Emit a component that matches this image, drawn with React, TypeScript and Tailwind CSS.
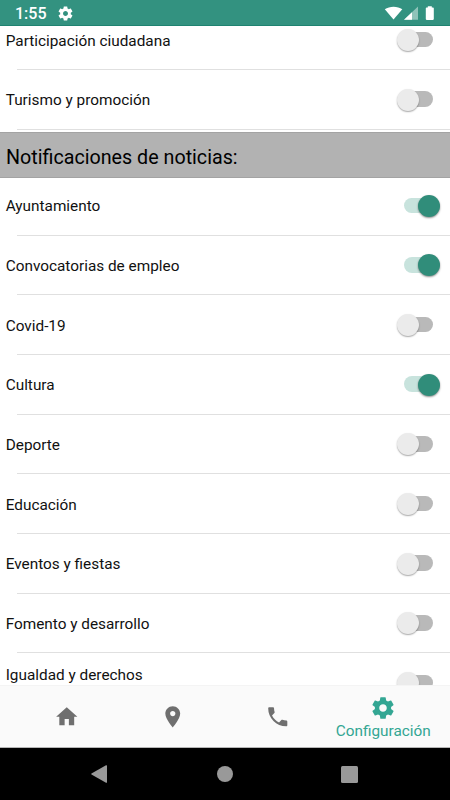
// src/App.tsx
import clsx from "clsx";

type Topic = { name: string; on?: boolean; tall?: boolean };

const agendaTopics: Topic[] = [
  { name: "Participación ciudadana" },
  { name: "Turismo y promoción" },
];

const newsTopics: Topic[] = [
  { name: "Ayuntamiento", on: true },
  { name: "Convocatorias de empleo", on: true },
  { name: "Covid-19" },
  { name: "Cultura", on: true },
  { name: "Deporte" },
  { name: "Educación" },
  { name: "Eventos y fiestas" },
  { name: "Fomento y desarrollo" },
  { name: "Igualdad y derechos", tall: true },
];

const GEAR =
  "M19.43 12.98c.04-.32.07-.64.07-.98s-.03-.66-.07-.98l2.11-1.65c.19-.15.24-.42.12-.64l-2-3.46c-.12-.22-.39-.3-.61-.22l-2.49 1c-.52-.4-1.08-.73-1.69-.98l-.38-2.65C14.46 2.18 14.25 2 14 2h-4c-.25 0-.46.18-.49.42l-.38 2.65c-.61.25-1.17.59-1.69.98l-2.49-1c-.23-.09-.49 0-.61.22l-2 3.46c-.13.22-.07.49.12.64l2.11 1.65c-.04.32-.07.65-.07.98s.03.66.07.98l-2.11 1.65c-.19.15-.24.42-.12.64l2 3.46c.12.22.39.3.61.22l2.49-1c.52.4 1.08.73 1.69.98l.38 2.65c.03.24.24.42.49.42h4c.25 0 .46-.18.49-.42l.38-2.65c.61-.25 1.17-.59 1.69-.98l2.49 1c.23.09.49 0 .61-.22l2-3.46c.12-.22.07-.49-.12-.64l-2.11-1.65zM12 15.5c-1.93 0-3.5-1.57-3.5-3.5s1.57-3.5 3.5-3.5 3.5 1.57 3.5 3.5-1.57 3.5-3.5 3.5z";
const HOME = "M10 20v-6h4v6h5v-8h3L12 3 2 12h3v8z";
const PIN =
  "M12 2C8.13 2 5 5.13 5 9c0 5.25 7 13 7 13s7-7.75 7-13c0-3.87-3.13-7-7-7zm0 9.5c-1.38 0-2.5-1.12-2.5-2.5s1.12-2.5 2.5-2.5 2.5 1.12 2.5 2.5-1.12 2.5-2.5 2.5z";
const PHONE =
  "M20 15.5c-1.25 0-2.45-.2-3.57-.57-.1-.03-.21-.05-.31-.05-.26 0-.51.1-.71.29l-2.2 2.2c-2.83-1.44-5.15-3.75-6.59-6.59l2.2-2.21c.28-.26.36-.65.25-1C8.7 6.45 8.5 5.25 8.5 4c0-.55-.45-1-1-1H4c-.55 0-1 .45-1 1 0 9.39 7.61 17 17 17 .55 0 1-.45 1-1v-3.5c0-.55-.45-1-1-1z";

function Icon({ path, className }: { path: string; className?: string }) {
  return (
    <svg viewBox="0 0 24 24" fill="currentColor" className={className}>
      <path d={path} />
    </svg>
  );
}

function StatusBar() {
  return (
    <header className="z-10 flex h-[26px] shrink-0 items-center border-b border-[#1f8371] bg-[#339280] pl-[15px] pr-[14px] pt-[2px] text-white">
      <span className="w-[31px] pt-px text-[16px] leading-none font-medium">1:55</span>
      <Icon path={GEAR} className="ml-[11px] size-[17px] -mt-px" />
      <svg viewBox="0 0 52 16" className="ml-auto h-4 w-[52px]">
        <path d="M.8 3.300C5.500 -.2 13.600 -.2 18.300 3.300L9.500 13.600z" fill="#fff" />
        <path d="M34 .5v13.200H20z" fill="#fff" fillOpacity=".45" />
        <path d="M28 6.200v7.500h-8z" fill="#fff" />
        <path d="M43.800 1.500V.3h4v1.200h1.200c.5 0 .8.300.8.800v10.800c0 .5-.3.800-.8.800h-6.400c-.5 0-.8-.3-.8-.8V2.300c0-.5.3-.8.800-.8z" fill="#fff" />
      </svg>
    </header>
  );
}

function Toggle({ on }: { on?: boolean }) {
  return (
    <span
      role="switch"
      aria-checked={!!on}
      className={clsx(
        "flex w-[43.500px] shrink-0 items-center",
        on ? "justify-end" : "justify-start"
      )}
    >
      {on ? (
        <>
          <span className="-mr-[14px] -mt-px h-[15.500px] w-[28px] rounded-full bg-[#c8e3dd]" />
          <span className="z-[1] size-[22px] rounded-full bg-[#308d7a] shadow-[0_1px_2px_rgba(0,0,0,0.45)]" />
        </>
      ) : (
        <>
          <span className="z-[1] size-[22px] rounded-full bg-[#ebebeb] shadow-[0_1px_1.500px_rgba(0,0,0,0.35)]" />
          <span className="-ml-[14px] -mt-px h-[15.500px] w-[28px] rounded-full bg-[#b9b9b9]" />
        </>
      )}
    </span>
  );
}

function TopicRow({ topic, first }: { topic: Topic; first?: boolean }) {
  return (
    <li className={clsx("flex shrink-0 flex-col", first ? "h-[58px]" : "h-[59.67px]")}>
      <div
        className={clsx(
          "flex flex-1 items-center justify-between pl-[5.700px] pr-[10px]",
          first ? "pb-px" : "pt-[0.500px]"
        )}
      >
        <span
          className={clsx(
            "text-[15.350px] leading-[18px] text-[#111]",
            topic.tall ? "pb-[15.500px]" : "pt-px"
          )}
        >
          {topic.name}
        </span>
        <Toggle on={topic.on} />
      </div>
      <div className="ml-[17px] h-px bg-[#e0e0e0]" />
    </li>
  );
}

function TabBar() {
  return (
    <nav className="z-10 flex h-[63px] shrink-0 items-center border-t border-b border-t-[#f4f4f4] border-b-[#b5b5b5] bg-[#fafafa] pl-[14px] text-[#6f6f6f]">
      <div className="flex w-[105.500px] justify-center">
        <Icon path={HOME} className="size-[25.500px]" />
      </div>
      <div className="flex w-[105.500px] justify-center">
        <Icon path={PIN} className="size-[25.500px]" />
      </div>
      <div className="flex w-[105.500px] justify-center">
        <Icon path={PHONE} className="size-[25.500px]" />
      </div>
      <div className="flex w-[105.500px] flex-col items-center pt-[4px] text-[#33a693]">
        <Icon path={GEAR} className="size-[26px]" />
        <span className="text-[15.350px] leading-[21px]">Configuración</span>
      </div>
    </nav>
  );
}

function SystemNav() {
  return (
    <footer className="flex h-[52px] shrink-0 items-center bg-black pl-[90px] text-[#999]">
      <svg viewBox="0 0 18 18" className="size-[18px]" fill="currentColor">
        <path d="M16 .3c.6-.3 1 0 1 .5v16.400c0 .5-.4.800-1 .5L1.500 9.500c-.5-.3-.5-.7 0-1z" />
      </svg>
      <span className="ml-[109px] size-[15.500px] rounded-full bg-[#999]" />
      <span className="ml-[108.500px] size-[17px] rounded-[1.500px] bg-[#999]" />
    </footer>
  );
}

function App() {
  return (
    <div className="flex h-[800px] w-[450px] flex-col overflow-hidden bg-white font-['Roboto',sans-serif]">
      <StatusBar />

      <main className="flex min-h-0 flex-1 flex-col overflow-hidden">
        <ul className="-mt-[15.500px] mb-[2px] flex shrink-0 flex-col">
          {agendaTopics.map((topic) => (
            <TopicRow key={topic.name} topic={topic} />
          ))}
        </ul>

        <h2 className="flex h-[46px] shrink-0 items-center border-y border-[#a3a3a3] bg-[#b2b2b2] pl-[6px] pt-[6px] text-[19.700px] text-black">
          Notificaciones de noticias:
        </h2>

        <ul className="flex shrink-0 flex-col">
          {newsTopics.map((topic, i) => (
            <TopicRow key={topic.name} topic={topic} first={i === 0} />
          ))}
        </ul>
      </main>

      <TabBar />
      <SystemNav />
    </div>
  );
}

export default App;
